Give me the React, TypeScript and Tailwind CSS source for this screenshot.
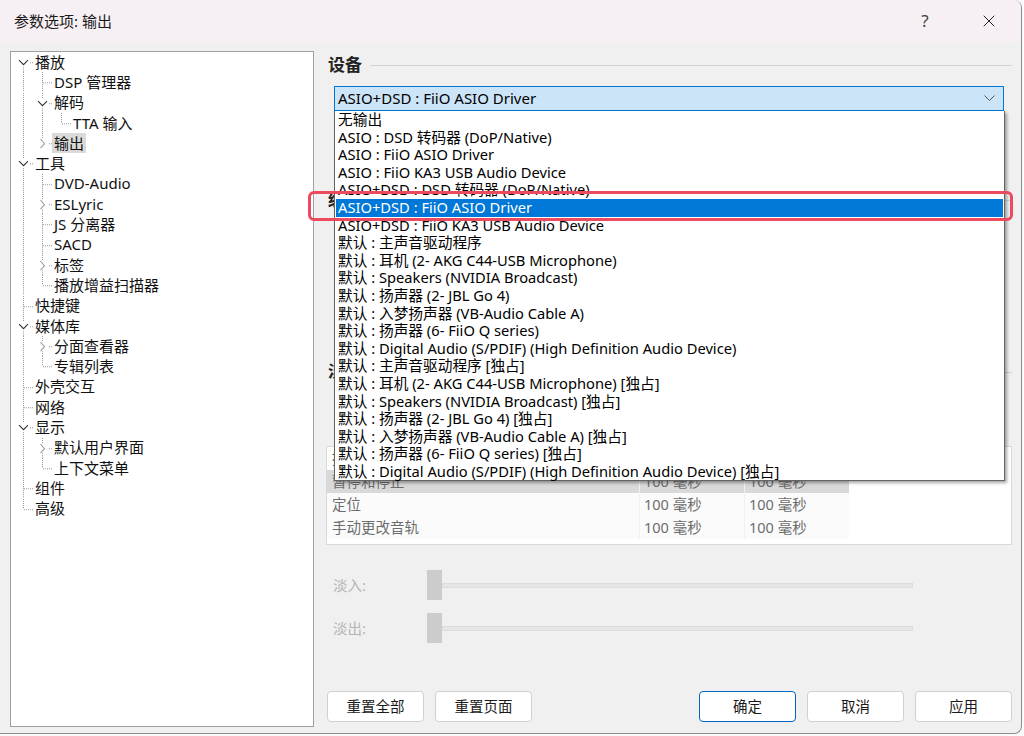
import { X } from "lucide-react";

type TreeRow = {
  label: string;
  guides: boolean[];
  kind: "open" | "closed" | "leaf";
  first?: boolean;
  last?: boolean;
  selected?: boolean;
};

const rows: TreeRow[] = [
  { label: "播放", guides: [], kind: "open", first: true },
  { label: "DSP 管理器", guides: [true], kind: "leaf" },
  { label: "解码", guides: [true], kind: "open" },
  { label: "TTA 输入", guides: [true, true], kind: "leaf", last: true },
  { label: "输出", guides: [true], kind: "closed", last: true, selected: true },
  { label: "工具", guides: [], kind: "open" },
  { label: "DVD-Audio", guides: [true], kind: "leaf" },
  { label: "ESLyric", guides: [true], kind: "closed" },
  { label: "JS 分离器", guides: [true], kind: "leaf" },
  { label: "SACD", guides: [true], kind: "leaf" },
  { label: "标签", guides: [true], kind: "closed" },
  { label: "播放增益扫描器", guides: [true], kind: "leaf", last: true },
  { label: "快捷键", guides: [], kind: "leaf" },
  { label: "媒体库", guides: [], kind: "open" },
  { label: "分面查看器", guides: [true], kind: "closed" },
  { label: "专辑列表", guides: [true], kind: "leaf", last: true },
  { label: "外壳交互", guides: [], kind: "leaf" },
  { label: "网络", guides: [], kind: "leaf" },
  { label: "显示", guides: [], kind: "open" },
  { label: "默认用户界面", guides: [true], kind: "closed" },
  { label: "上下文菜单", guides: [true], kind: "leaf", last: true },
  { label: "组件", guides: [], kind: "leaf" },
  { label: "高级", guides: [], kind: "leaf", last: true },
];

const devices = [
  "无输出",
  "ASIO : DSD 转码器 (DoP/Native)",
  "ASIO : FiiO ASIO Driver",
  "ASIO : FiiO KA3 USB Audio Device",
  "ASIO+DSD : DSD 转码器 (DoP/Native)",
  "ASIO+DSD : FiiO ASIO Driver",
  "ASIO+DSD : FiiO KA3 USB Audio Device",
  "默认 : 主声音驱动程序",
  "默认 : 耳机 (2- AKG C44-USB Microphone)",
  "默认 : Speakers (NVIDIA Broadcast)",
  "默认 : 扬声器 (2- JBL Go 4)",
  "默认 : 入梦扬声器 (VB-Audio Cable A)",
  "默认 : 扬声器 (6- FiiO Q series)",
  "默认 : Digital Audio (S/PDIF) (High Definition Audio Device)",
  "默认 : 主声音驱动程序 [独占]",
  "默认 : 耳机 (2- AKG C44-USB Microphone) [独占]",
  "默认 : Speakers (NVIDIA Broadcast) [独占]",
  "默认 : 扬声器 (2- JBL Go 4) [独占]",
  "默认 : 入梦扬声器 (VB-Audio Cable A) [独占]",
  "默认 : 扬声器 (6- FiiO Q series) [独占]",
  "默认 : Digital Audio (S/PDIF) (High Definition Audio Device) [独占]",
];

const fadeRows = [
  { name: "暂停和停止", a: "100 毫秒", b: "100 毫秒", selected: true },
  { name: "定位", a: "100 毫秒", b: "100 毫秒" },
  { name: "手动更改音轨", a: "100 毫秒", b: "100 毫秒" },
];

const dot = "#9a9a9a";

function GuideCell({ on }: { on: boolean }) {
  return (
    <svg className="h-full w-[19px] shrink-0" viewBox="0 0 19 20" preserveAspectRatio="none">
      {on && (
        <line x1="9.5" y1="0" x2="9.5" y2="20" stroke={dot} strokeDasharray="1 1" />
      )}
    </svg>
  );
}

function ConnectorCell({ row }: { row: TreeRow }) {
  const leaf = row.kind === "leaf";

  return (
    <svg className="h-full w-[19px] shrink-0" viewBox="0 0 19 20" preserveAspectRatio="none">
      {!row.first && (
        <line x1="9.5" y1="0" x2="9.5" y2={leaf ? 10 : 5} stroke={dot} strokeDasharray="1 1" />
      )}
      {!row.last && (
        <line x1="9.5" y1={leaf ? 10 : 15} x2="9.5" y2="20" stroke={dot} strokeDasharray="1 1" />
      )}
      {leaf
        ? <line x1="10" y1="10.5" x2="19" y2="10.5" stroke={dot} strokeDasharray="1 1" />
        : <line x1="16" y1="10.5" x2="19" y2="10.5" stroke={dot} strokeDasharray="1 1" />}
      {row.kind === "open" && (
        <polyline points="5,8 9.5,12.5 14,8" fill="none" stroke="#333" strokeWidth="1.1" />
      )}
      {row.kind === "closed" && (
        <polyline points="7.5,6 11.5,10.5 7.5,15" fill="none" stroke="#a0a0a0" strokeWidth="1.1" />
      )}
    </svg>
  );
}

function Heading({ text }: { text: string }) {
  return (
    <div className="flex h-[24px] items-center gap-[8px]">
      <span className="text-[17px] font-bold text-[#222]">{text}</span>
      <div className="h-px flex-1 bg-[#d3d3d3]" />
    </div>
  );
}

function Slider({ label }: { label: string }) {
  return (
    <div className="flex h-[30px] items-center">
      <span className="w-[99px] pt-[2px] pl-[5px] text-[14.5px] text-[#b5b5b5]">{label}</span>
      <div className="h-[30px] w-[15px] bg-[#cccccc]" />
      <div className="h-[5px] w-[471px] border border-[#dcdcdc] bg-[#e6e6e6]" />
    </div>
  );
}

function DialogButton({ text, primary }: { text: string; primary?: boolean }) {
  return (
    <button
      className={
        primary
          ? "h-[31px] w-[97px] rounded-[4px] border border-[#0067c0] bg-white text-[14.5px] text-[#1a1a1a]"
          : "h-[31px] w-[97px] rounded-[4px] border border-[#d0d0d0] bg-white text-[14.5px] text-[#1a1a1a]"
      }
    >
      {text}
    </button>
  );
}

function App() {
  return (
    <div
      className="h-[736px] w-[1024px] overflow-hidden bg-[#fafafa]"
      style={{ fontFamily: '"Noto Sans", "Noto Sans CJK SC", sans-serif' }}
    >
      <div className="relative flex h-[734px] w-[1022px] flex-col overflow-hidden rounded-r-[8px] border-r border-b border-[#8c8c8c] bg-[#f0f0f0]">

        {/* title bar */}
        <div className="flex h-[42px] shrink-0 items-center bg-[#f6eff4]">
          <span className="pl-[14px] text-[15px] text-[#1a1a1a]">参数选项: 输出</span>
          <div className="flex-1" />
          <span className="w-[30px] text-center text-[17px] text-[#444]">?</span>
          <div className="ml-[17px] flex w-[64px] justify-center">
            <X size={20} strokeWidth={1.2} className="text-[#222]" />
          </div>
        </div>

        {/* body */}
        <div className="flex flex-1 pt-[9px] pl-[10px]">

          {/* tree */}
          <div className="h-[676px] w-[304px] shrink-0 border border-[#a0a0a0] bg-white pl-[3px] text-[15px] text-[#111]">
            {rows.map((row) => (
              <div key={row.label} className="flex h-[20.3px] items-center">
                {row.guides.map((g, i) => (
                  <GuideCell key={i} on={g} />
                ))}
                <ConnectorCell row={row} />
                <span
                  className={
                    row.selected
                      ? "flex h-full items-center bg-[#dadada] px-[2px] leading-none"
                      : "flex h-full items-center px-[2px] leading-none"
                  }
                >
                  {row.label}
                </span>
              </div>
            ))}
          </div>

          {/* right panel */}
          <div className="relative flex flex-1 flex-col pr-[9px] pl-[14px]">

            <div className="mt-[2px]">
              <Heading text="设备" />
            </div>

            <div className="mt-[9px] ml-[6px] mr-[8px] flex h-[25px] items-center border border-[#0078d7] bg-[#cce4f7] pl-[3px] pr-[8px]">
              <span className="flex-1 text-[15px] text-black">ASIO+DSD : FiiO ASIO Driver</span>
              <svg width="11" height="7" viewBox="0 0 11 7">
                <polyline points="0.5,0.5 5.5,5.5 10.5,0.5" fill="none" stroke="#555" strokeWidth="1" />
              </svg>
            </div>

            <div className="mt-[77px]">
              <Heading text="缓冲长度" />
            </div>

            <div className="mt-[148px]">
              <Heading text="淡入淡出" />
            </div>

            {/* fading table */}
            <div className="mt-[62px] -ml-[2px] h-[99px] border border-[#d9d9d9] bg-white text-[14.5px] text-[#6d6d6d]">
              <div className="flex h-[23px] items-center text-[#333]">
                <span className="w-[313px] pl-[5px]">操作</span>
                <span className="w-[105px] pl-[4px]">淡入</span>
                <span className="w-[104px] pl-[4px]">淡出</span>
              </div>
              {fadeRows.map((r) => (
                <div
                  key={r.name}
                  className={
                    r.selected
                      ? "flex h-[23px] w-[522px] items-center bg-[#d9d9d9]"
                      : "flex h-[23px] w-[522px] items-center bg-[#fbfbfb]"
                  }
                >
                  <span className="h-full w-[313px] border-r border-[#f0f0f0] pl-[5px] leading-[23px]">{r.name}</span>
                  <span className="h-full w-[105px] border-r border-[#f0f0f0] pl-[4px] leading-[23px]">{r.a}</span>
                  <span className="h-full w-[104px] pl-[4px] leading-[23px]">{r.b}</span>
                </div>
              ))}
            </div>

            <div className="mt-[25px]">
              <Slider label="淡入:" />
            </div>
            <div className="mt-[13px]">
              <Slider label="淡出:" />
            </div>

            <div className="mt-[48px] -ml-[1px] flex items-center">
              <div className="flex gap-[11px]">
                <DialogButton text="重置全部" />
                <DialogButton text="重置页面" />
              </div>
              <div className="flex-1" />
              <div className="flex gap-[11px]">
                <DialogButton text="确定" primary />
                <DialogButton text="取消" />
                <DialogButton text="应用" />
              </div>
            </div>

            {/* open dropdown list */}
            <div className="absolute top-[60px] left-[20px] w-[671px] border border-t-0 border-[#646464] bg-white shadow-[2px_2px_3px_rgba(0,0,0,0.35)]">
              {devices.map((d, i) => (
                <div
                  key={d}
                  className={
                    i === 5
                      ? "mx-[1px] h-[17.6px] bg-[#0078d7] pl-[2px] text-[14.7px] leading-[17.6px] whitespace-nowrap text-white"
                      : "mx-[1px] h-[17.6px] pl-[2px] text-[14.7px] leading-[17.6px] whitespace-nowrap text-black"
                  }
                >
                  {d}
                </div>
              ))}
            </div>

            {/* annotation around the selected item */}
            <div className="absolute top-[140px] -left-[6px] h-[30px] w-[705px] rounded-[6px] border-[3.5px] border-[#ec4a5f]" />
          </div>
        </div>
      </div>
    </div>
  );
}

export default App;
